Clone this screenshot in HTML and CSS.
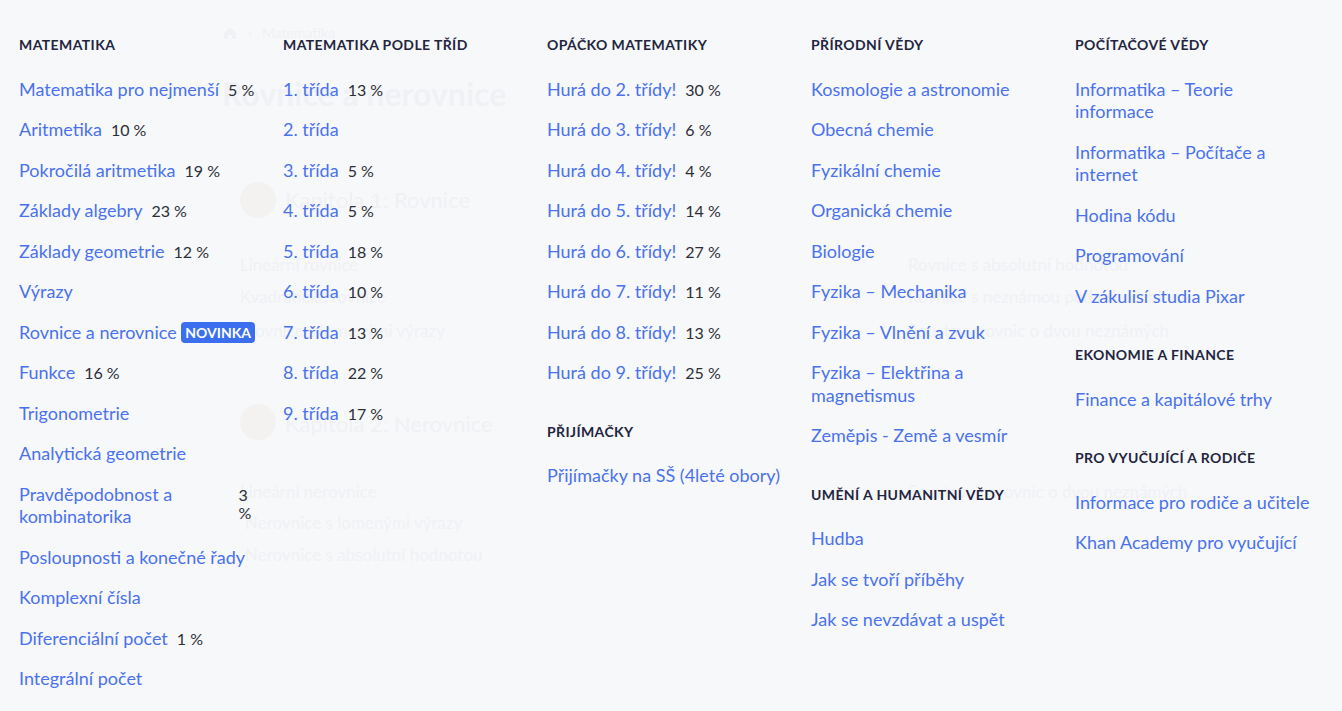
FILE: index.html
```html
<!DOCTYPE html>
<html lang="cs">
<head>
<meta charset="utf-8">
<title>Kurzy</title>
<link rel="stylesheet" href="styles.css">
</head>
<body>
<div class="ghost" aria-hidden="true">
  <div class="g-crumb" style="left:222px;top:24px"><svg width="16" height="16" viewBox="0 0 16 16"><path d="M2 8 L8 2 L14 8 V14 H10 V10 H6 V14 H2 Z" fill="currentColor"/></svg><span>›</span><span>Matematika</span></div>
  <div class="g-title" style="left:222px;top:74px">Rovnice a nerovnice</div>
  <div class="g-circle" style="left:240px;top:182px"></div>
  <div class="g-chap" style="left:285px;top:186px">Kapitola 1: Rovnice</div>
  <div class="g-item" style="left:240px;top:254px">Lineární rovnice</div>
  <div class="g-item" style="left:240px;top:286px">Kvadratické rovnice</div>
  <div class="g-item" style="left:245px;top:320px">Rovnice s lomenými výrazy</div>
  <div class="g-item" style="left:908px;top:254px">Rovnice s absolutní hodnotou</div>
  <div class="g-item" style="left:908px;top:286px">Rovnice s neznámou pod odmocninou</div>
  <div class="g-item" style="left:908px;top:320px">Soustavy rovnic o dvou neznámých</div>
  <div class="g-circle" style="left:240px;top:404px"></div>
  <div class="g-chap" style="left:285px;top:410px">Kapitola 2: Nerovnice</div>
  <div class="g-item" style="left:240px;top:481px">Lineární nerovnice</div>
  <div class="g-item" style="left:245px;top:512px">Nerovnice s lomenými výrazy</div>
  <div class="g-item" style="left:245px;top:544px">Nerovnice s absolutní hodnotou</div>
  <div class="g-item" style="left:908px;top:481px">Soustavy nerovnic o dvou neznámých</div>
</div>

<nav class="menu">
  <div class="col">
    <section class="sec">
      <h3>Matematika</h3>
      <ul>
        <li><a>Matematika pro nejmenší</a><span class="pct">5&nbsp;%</span></li>
        <li><a>Aritmetika</a><span class="pct">10&nbsp;%</span></li>
        <li><a>Pokročilá aritmetika</a><span class="pct">19&nbsp;%</span></li>
        <li><a>Základy algebry</a><span class="pct">23&nbsp;%</span></li>
        <li><a>Základy geometrie</a><span class="pct">12&nbsp;%</span></li>
        <li><a>Výrazy</a></li>
        <li><a>Rovnice a nerovnice <span class="badge">NOVINKA</span></a></li>
        <li><a>Funkce</a><span class="pct">16&nbsp;%</span></li>
        <li><a>Trigonometrie</a></li>
        <li><a>Analytická geometrie</a></li>
        <li><a>Pravděpodobnost a kombinatorika</a><span class="pct">3 %</span></li>
        <li><a>Posloupnosti a konečné řady</a></li>
        <li><a>Komplexní čísla</a></li>
        <li><a>Diferenciální počet</a><span class="pct">1&nbsp;%</span></li>
        <li><a>Integrální počet</a></li>
      </ul>
    </section>
  </div>
  <div class="col">
    <section class="sec">
      <h3>Matematika podle tříd</h3>
      <ul>
        <li><a>1. třída</a><span class="pct">13&nbsp;%</span></li>
        <li><a>2. třída</a></li>
        <li><a>3. třída</a><span class="pct">5&nbsp;%</span></li>
        <li><a>4. třída</a><span class="pct">5&nbsp;%</span></li>
        <li><a>5. třída</a><span class="pct">18&nbsp;%</span></li>
        <li><a>6. třída</a><span class="pct">10&nbsp;%</span></li>
        <li><a>7. třída</a><span class="pct">13&nbsp;%</span></li>
        <li><a>8. třída</a><span class="pct">22&nbsp;%</span></li>
        <li><a>9. třída</a><span class="pct">17&nbsp;%</span></li>
      </ul>
    </section>
  </div>
  <div class="col">
    <section class="sec">
      <h3>Opáčko matematiky</h3>
      <ul>
        <li><a>Hurá do 2. třídy!</a><span class="pct">30&nbsp;%</span></li>
        <li><a>Hurá do 3. třídy!</a><span class="pct">6&nbsp;%</span></li>
        <li><a>Hurá do 4. třídy!</a><span class="pct">4&nbsp;%</span></li>
        <li><a>Hurá do 5. třídy!</a><span class="pct">14&nbsp;%</span></li>
        <li><a>Hurá do 6. třídy!</a><span class="pct">27&nbsp;%</span></li>
        <li><a>Hurá do 7. třídy!</a><span class="pct">11&nbsp;%</span></li>
        <li><a>Hurá do 8. třídy!</a><span class="pct">13&nbsp;%</span></li>
        <li><a>Hurá do 9. třídy!</a><span class="pct">25&nbsp;%</span></li>
      </ul>
    </section>
    <section class="sec">
      <h3>Přijímačky</h3>
      <ul>
        <li><a>Přijímačky na SŠ (4leté obory)</a></li>
      </ul>
    </section>
  </div>
  <div class="col">
    <section class="sec">
      <h3>Přírodní vědy</h3>
      <ul>
        <li><a>Kosmologie a astronomie</a></li>
        <li><a>Obecná chemie</a></li>
        <li><a>Fyzikální chemie</a></li>
        <li><a>Organická chemie</a></li>
        <li><a>Biologie</a></li>
        <li><a>Fyzika – Mechanika</a></li>
        <li><a>Fyzika – Vlnění a zvuk</a></li>
        <li><a>Fyzika – Elektřina a magnetismus</a></li>
        <li><a>Zeměpis - Země a vesmír</a></li>
      </ul>
    </section>
    <section class="sec">
      <h3>Umění a humanitní vědy</h3>
      <ul>
        <li><a>Hudba</a></li>
        <li><a>Jak se tvoří příběhy</a></li>
        <li><a>Jak se nevzdávat a uspět</a></li>
      </ul>
    </section>
  </div>
  <div class="col">
    <section class="sec">
      <h3>Počítačové vědy</h3>
      <ul>
        <li><a>Informatika – Teorie informace</a></li>
        <li><a>Informatika – Počítače a internet</a></li>
        <li><a>Hodina kódu</a></li>
        <li><a>Programování</a></li>
        <li><a>V zákulisí studia Pixar</a></li>
      </ul>
    </section>
    <section class="sec">
      <h3>Ekonomie a finance</h3>
      <ul>
        <li><a>Finance a kapitálové trhy</a></li>
      </ul>
    </section>
    <section class="sec">
      <h3>Pro vyučující a rodiče</h3>
      <ul>
        <li><a>Informace pro rodiče a učitele</a></li>
        <li><a>Khan Academy pro vyučující</a></li>
      </ul>
    </section>
  </div>
</nav>
</body>
</html>
```
FILE: styles.css
```css
* { box-sizing: border-box; }
html, body {
  margin: 0;
  padding: 0;
  background: #f7f8fa;
  font-family: Lato, "Noto Sans", "Liberation Sans", sans-serif;
  height: 100%;
  overflow: hidden;
}
.ghost {
  position: absolute;
  inset: 0;
  color: #f0f1f4;
  z-index: 0;
}
.ghost > div { position: absolute; white-space: nowrap; }
.g-crumb { display: flex; align-items: center; gap: 10px; font-size: 14px; }
.g-title { font-size: 32px; font-weight: 700; }
.g-chap { font-size: 22px; }
.g-item { font-size: 17px; }
.g-circle { width: 36px; height: 36px; border-radius: 50%; background: #f3f2f0; }

.menu {
  position: relative;
  z-index: 1;
  display: grid;
  grid-template-columns: repeat(5, 264px);
  padding: 35px 0 0 19px;
}
.col {
  padding-right: 24px;
  display: flex;
  flex-direction: column;
  gap: 29px;
}
.sec h3 {
  margin: 0 0 13.5px;
  font-size: 14px;
  line-height: 20px;
  font-weight: 700;
  text-transform: uppercase;
  letter-spacing: 0.4px;
  color: #1f2640;
}
.sec ul {
  list-style: none;
  margin: 0;
  padding: 0;
}
.sec li {
  display: flex;
  align-items: baseline;
  padding: 9px 0;
  line-height: 22.5px;
}
.sec a {
  font-size: 18px;
  color: #4a72ee;
  text-decoration: none;
}
.pct {
  margin-left: 9px;
  font-size: 16px;
  line-height: 18px;
  color: #2c2f36;
}
.badge {
  display: inline-block;
  background: #3c6ef0;
  color: #fff;
  font-size: 14px;
  font-weight: 700;
  line-height: 21px;
  padding: 0 4px;
  border-radius: 4px;
  vertical-align: 1px;
}
```
